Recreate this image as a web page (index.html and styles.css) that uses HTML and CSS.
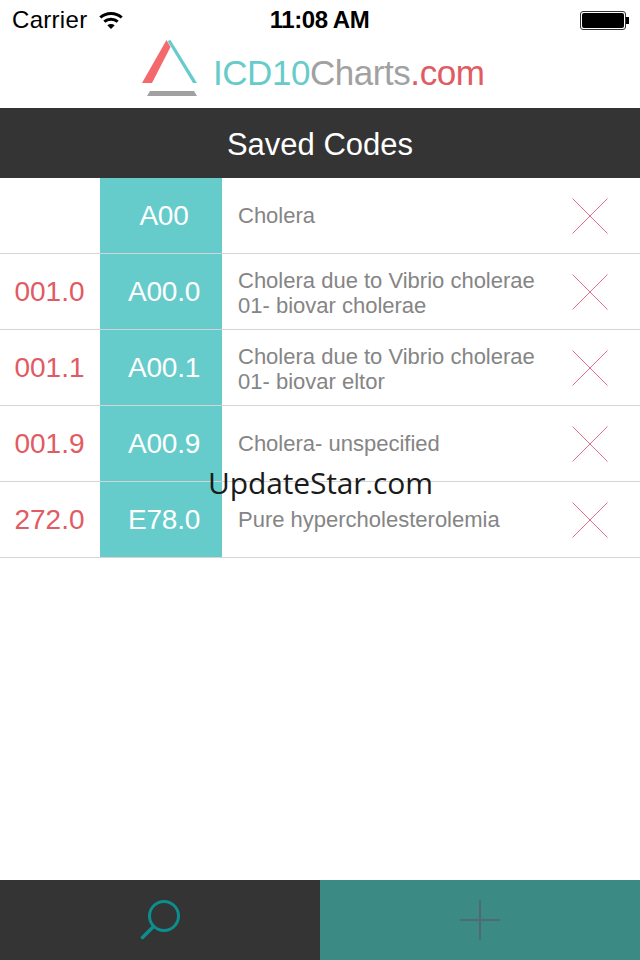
FILE: index.html
```html
<!DOCTYPE html>
<html lang="en">
<head>
<meta charset="utf-8">
<title>Saved Codes</title>
<link rel="stylesheet" href="styles.css">
</head>
<body>
<div class="app">
  <div class="status">
    <div class="status-left">
      <span class="carrier">Carrier</span>
      <svg class="wifi" width="24" height="18" viewBox="0 0 24 18"><path d="M1.300 6.500C7.200 1 16.800 1 22.700 6.500M5.300 10.700c3.800-3.400 9.600-3.400 13.400 0" fill="none" stroke="#000" stroke-width="3"/><path d="M8.300 14.300c2.200-1.700 5.200-1.700 7.400 0L12 18z" fill="#000"/></svg>
    </div>
    <div class="status-time">11:08 AM</div>
    <div class="status-right">
      <div class="battery"><div class="battery-fill"></div></div>
      <div class="battery-tip"></div>
    </div>
  </div>
  <header class="brand">
    <svg class="logo" width="57" height="57" viewBox="0 0 57 57">
      <polygon points="1,43 11,43 29.500,7 25.500,0" fill="#f4696c"/>
      <polygon points="26.500,1 29.500,0 56,43 52,43" fill="#66cccb"/>
      <polygon points="9,51 53,51 56,56 6,56" fill="#a1a1a1"/>
    </svg>
    <div class="brand-name"><span class="teal">ICD10</span><span class="grey">Charts</span><span class="red">.com</span></div>
  </header>
  <h1 class="title">Saved Codes</h1>
  <main class="list">
    <div class="row">
      <div class="old"></div><div class="code">A00</div>
      <div class="desc">Cholera</div>
      <svg class="del" width="36" height="36" viewBox="0 0 36 36"><path d="M.500.500l35 35M35.500.500l-35 35" stroke="#e0718c" stroke-width="1" fill="none"/></svg>
    </div>
    <div class="row">
      <div class="old">001.0</div><div class="code">A00.0</div>
      <div class="desc desc-two">Cholera due to Vibrio cholerae<br>01- biovar cholerae</div>
      <svg class="del" width="36" height="36" viewBox="0 0 36 36"><path d="M.500.500l35 35M35.500.500l-35 35" stroke="#e0718c" stroke-width="1" fill="none"/></svg>
    </div>
    <div class="row">
      <div class="old">001.1</div><div class="code">A00.1</div>
      <div class="desc desc-two">Cholera due to Vibrio cholerae<br>01- biovar eltor</div>
      <svg class="del" width="36" height="36" viewBox="0 0 36 36"><path d="M.500.500l35 35M35.500.500l-35 35" stroke="#e0718c" stroke-width="1" fill="none"/></svg>
    </div>
    <div class="row">
      <div class="old">001.9</div><div class="code">A00.9</div>
      <div class="desc">Cholera- unspecified</div>
      <svg class="del" width="36" height="36" viewBox="0 0 36 36"><path d="M.500.500l35 35M35.500.500l-35 35" stroke="#e0718c" stroke-width="1" fill="none"/></svg>
    </div>
    <div class="row">
      <div class="old">272.0</div><div class="code">E78.0</div>
      <div class="desc">Pure hypercholesterolemia</div>
      <svg class="del" width="36" height="36" viewBox="0 0 36 36"><path d="M.500.500l35 35M35.500.500l-35 35" stroke="#e0718c" stroke-width="1" fill="none"/></svg>
    </div>
  </main>
  <nav class="tabs">
    <div class="tab tab-search">
      <svg width="42" height="42" viewBox="0 0 42 42"><circle cx="25" cy="17" r="14.500" fill="none" stroke="#0d8e8e" stroke-width="3"/><path d="M14.500 27.500L3.500 38.500" stroke="#0d8e8e" stroke-width="3.500" stroke-linecap="round"/></svg>
    </div>
    <div class="tab tab-add">
      <svg width="40" height="40" viewBox="0 0 40 40"><path d="M20 0v40M0 20h40" stroke="#4f6a70" stroke-width="2" fill="none"/></svg>
    </div>
  </nav>
  <div class="watermark">UpdateStar.com</div>
</div>
</body>
</html>
```
FILE: styles.css
```css
* { box-sizing: border-box; }
html, body { margin: 0; padding: 0; background: #fff; }
.app {
  position: relative;
  width: 640px;
  height: 960px;
  display: flex;
  flex-direction: column;
  font-family: "Liberation Sans", Arial, sans-serif;
  overflow: hidden;
}
.status {
  height: 40px;
  flex: none;
  display: grid;
  grid-template-columns: 1fr auto 1fr;
  align-items: center;
  padding: 0 11px 0 12px;
  color: #000;
  font-size: 24px;
}
.status-left { display: flex; align-items: center; gap: 12px; }
.carrier { letter-spacing: 0.3px; }
.wifi { display: block; }
.status-time { font-weight: 700; letter-spacing: -0.45px; padding-right: 2px; }
.status-right { display: flex; justify-content: flex-end; align-items: center; }
.battery {
  width: 46px;
  height: 19px;
  border: 1px solid #333;
  border-radius: 3px;
  padding: 1px;
}
.battery-fill { width: 100%; height: 100%; background: #000; border-radius: 2px; }
.battery-tip { width: 3px; height: 7px; background: #000; }
.brand {
  height: 68px;
  flex: none;
  display: flex;
  align-items: flex-start;
  padding-left: 141px;
}
.logo { display: block; margin-right: 15px; }
.brand-name { font-size: 35px; line-height: 65px; letter-spacing: -0.45px; }
.teal { color: #66cccb; }
.grey { color: #a1a1a1; }
.red { color: #e25a62; }
.title {
  height: 70px;
  flex: none;
  margin: 0;
  background: #343434;
  color: #fff;
  font-size: 31px;
  font-weight: 400;
  line-height: 73px;
  text-align: center;
}
.list { flex: 1; }
.row {
  height: 76px;
  display: flex;
  align-items: center;
  border-bottom: 1px solid #d4d4d4;
}
.old {
  width: 100px;
  padding: 1px 1px 0 0;
  text-align: center;
  color: #e25a62;
  font-size: 28px;
}
.code {
  width: 122px;
  height: 75px;
  padding-left: 6px;
  background: #66cccb;
  color: #fff;
  font-size: 28px;
  line-height: 76px;
  letter-spacing: -0.2px;
  text-align: center;
}
.desc {
  flex: 1;
  padding-left: 16px;
  color: #858585;
  font-size: 22px;
  line-height: 25px;
}
.desc-two { padding-top: 3px; }
.del { display: block; margin: 1px 32px 0 0; }
.tabs { height: 80px; flex: none; display: flex; }
.tab { flex: 1; display: flex; align-items: center; justify-content: center; }
.tab-search { background: #343434; }
.tab-add { background: #3b8a83; }
.watermark {
  position: absolute;
  left: 208px;
  top: 463px;
  color: #1a1a1a;
  font-family: "Open Sans", sans-serif;
  font-size: 30px;
  line-height: 40px;
  letter-spacing: -0.15px;
}
```
